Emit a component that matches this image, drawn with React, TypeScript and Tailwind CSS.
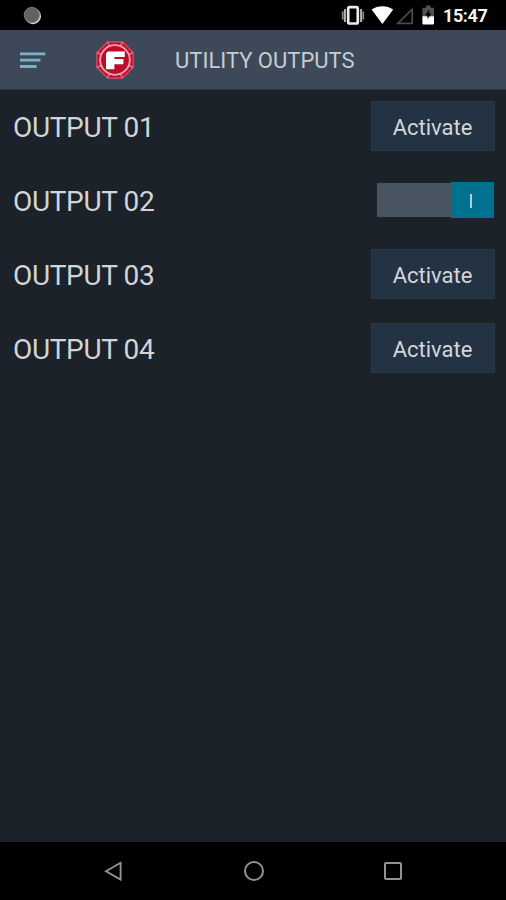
import { useState } from 'react'

interface Output {
  id: number
  name: string
  kind: 'pulse' | 'toggle'
}

const OUTPUTS: Output[] = [
  { id: 1, name: 'OUTPUT 01', kind: 'pulse' },
  { id: 2, name: 'OUTPUT 02', kind: 'toggle' },
  { id: 3, name: 'OUTPUT 03', kind: 'pulse' },
  { id: 4, name: 'OUTPUT 04', kind: 'pulse' },
]

function StatusBar() {
  return (
    <div className="flex h-[30px] shrink-0 items-center bg-black pl-[23px] pr-[19px]">
      <svg width="19" height="19" viewBox="0 0 19 19">
        <circle cx="10" cy="10.2" r="8" fill="#d6d6d6" />
        <circle cx="8.9" cy="9" r="7.7" fill="#626262" stroke="#858585" strokeWidth="0.8" />
      </svg>
      <svg className="ml-auto" width="94" height="22" viewBox="341 4 94 22">
        {/* vibrate */}
        <path d="M342.7 11.5v8M363.3 11.5v8" stroke="#8a8a8a" strokeWidth="1.7" />
        <path d="M344.9 9v13M361.1 9v13" stroke="#b4b4b4" strokeWidth="2" />
        <rect x="348.2" y="7.1" width="9.6" height="16.4" rx="1.6" fill="#000" stroke="#ececec" strokeWidth="2.7" />
        {/* wifi */}
        <path d="M371.6 9.6C377.8 5 387 5 393.2 9.6L382.4 24z" fill="#fff" />
        {/* no signal */}
        <path d="M412.2 9.2v14.1h-14.4z" fill="none" stroke="#4b4b4b" strokeWidth="1.7" />
        {/* charging battery */}
        <path d="M426 5.5h4.6v2.2h3.4v8.8h-11.6V7.7h3.6z" fill="#515151" />
        <path d="M422.4 16.3H434v7q0 1.2-1.2 1.2h-9.2q-1.2 0-1.2-1.2z" fill="#fff" />
        <path d="M429.2 9.5l-4.2 6h2.5v3.4l4-5.3h-2.3z" fill="#000" />
      </svg>
      <span className="ml-2 w-[44px] whitespace-nowrap pt-px text-[18px] leading-none font-bold tracking-[-0.4px] text-[#f2f2f2]">15:47</span>
    </div>
  )
}

function Logo() {
  return (
    <svg width="40" height="40" viewBox="0 0 40 40">
      <path
        d="M12.5 1.8h15L38.2 12.5v15L27.5 38.2h-15L1.8 27.5v-15z"
        fill="#c8102e"
        stroke="#d0506a"
        strokeWidth="1.2"
      />
      <path
        d="M12.5 2l2.3 4.5M27.5 2l-2.3 4.5M38 12.5l-4.5 2.3M38 27.5l-4.5-2.3M27.5 38l-2.3-4.5M12.5 38l2.3-4.5M2 27.5l4.5-2.3M2 12.5l4.5 2.3"
        stroke="#dd7388"
        strokeWidth="1.6"
      />
      <circle cx="20" cy="20" r="14.8" fill="#bd0c29" stroke="#efa5b2" strokeWidth="1.8" />
      <path d="M12.8 11.6h17v5.3H19.4v2.2h9v5.2h-9v5H11v-15.9z" fill="#fff" />
    </svg>
  )
}

function Header() {
  return (
    <header className="flex h-[60px] shrink-0 items-center border-b border-[#27323c] bg-[#3d4958] pl-5">
      <button aria-label="Menu">
        <svg width="26" height="18" viewBox="0 0 26 18">
          <path d="M0 2.8h25.3M0 9.2h20.4M0 15.5h16.6" stroke="#7fafc8" strokeWidth="2.8" />
        </svg>
      </button>
      <div className="ml-[49px]">
        <Logo />
      </div>
      <h1 className="ml-10 whitespace-nowrap pt-0.5 text-[22px] leading-none text-[#c5ccd3]">UTILITY OUTPUTS</h1>
    </header>
  )
}

function Toggle() {
  const [on, setOn] = useState(true)
  return (
    <button
      role="switch"
      aria-checked={on}
      onClick={() => setOn(!on)}
      className={`mr-px mb-0.5 flex h-9 w-[117px] items-center border-y border-[#1b222a] bg-[#48545f] ${on ? 'justify-end' : 'justify-start'}`}
    >
      <span className="-my-px flex h-9 w-[43px] items-center justify-center bg-[#00718f] pr-[3px]">
        <span className="mt-0.5 h-3.5 w-[2px] bg-[#b4ccd5]" />
      </span>
    </button>
  )
}

function OutputRow({ output }: { output: Output }) {
  return (
    <li className="flex h-[74px] items-center justify-between pl-[13px] pr-[11px]">
      <span className="pt-0.5 text-[28px] leading-none tracking-[-0.35px] text-[#d2d4d6]">{output.name}</span>
      {output.kind === 'toggle' ? (
        <Toggle />
      ) : (
        <button className="mb-[3px] h-[50px] w-[124px] border border-[#273645] bg-[#243343] pt-[5px] pr-px text-[22px] leading-none text-[#d3d6da]">
          Activate
        </button>
      )}
    </li>
  )
}

function NavBar() {
  return (
    <nav className="flex h-[58px] shrink-0 items-center justify-between bg-black pl-[103px] pr-[102px]">
      <svg width="20" height="22" viewBox="0 0 20 22" fill="none" stroke="#929292" strokeWidth="1.9">
        <path d="M17.6 2.8v16.8L3 11.2z" />
      </svg>
      <svg width="22" height="22" viewBox="0 0 22 22" fill="none" stroke="#929292" strokeWidth="2">
        <circle cx="11" cy="11" r="9" />
      </svg>
      <svg width="20" height="20" viewBox="0 0 20 20" fill="none" stroke="#929292" strokeWidth="2">
        <rect x="1" y="2" width="16" height="16" rx="1" />
      </svg>
    </nav>
  )
}

export default function App() {
  return (
    <div className="flex h-[900px] w-[506px] flex-col overflow-hidden bg-[#1b222a] font-[Roboto,sans-serif]">
      <StatusBar />
      <Header />
      <ul className="flex-1">
        {OUTPUTS.map(o => <OutputRow key={o.id} output={o} />)}
      </ul>
      <NavBar />
    </div>
  )
}
